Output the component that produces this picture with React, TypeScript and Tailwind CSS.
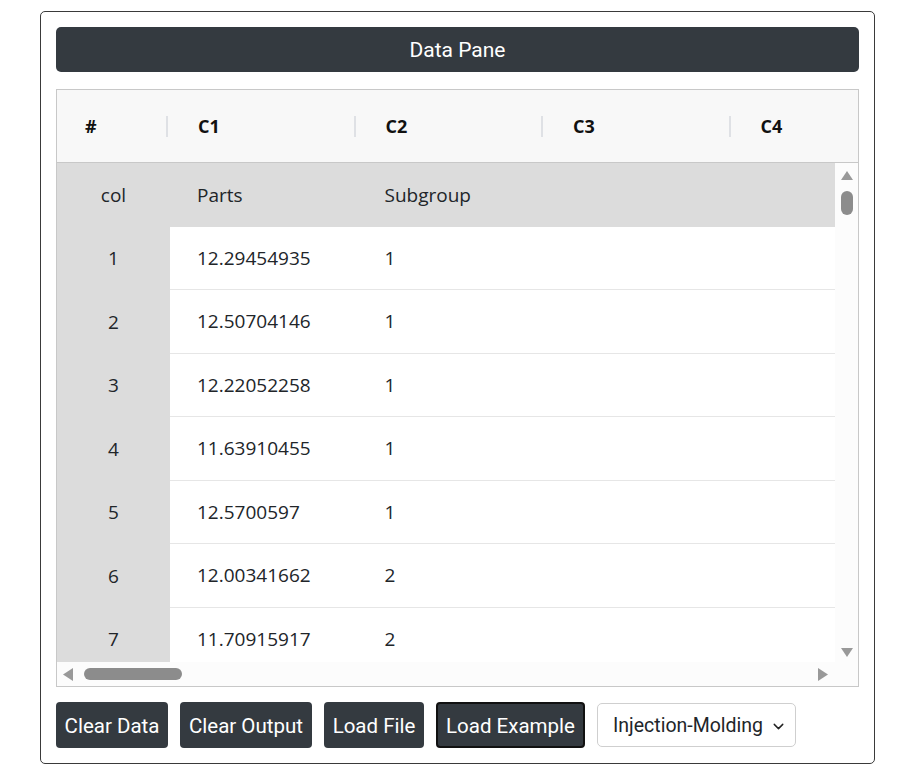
import { ChevronDown } from "lucide-react";

const rows = [
  { n: 1, parts: "12.29454935", sub: "1" },
  { n: 2, parts: "12.50704146", sub: "1" },
  { n: 3, parts: "12.22052258", sub: "1" },
  { n: 4, parts: "11.63910455", sub: "1" },
  { n: 5, parts: "12.5700597", sub: "1" },
  { n: 6, parts: "12.00341662", sub: "2" },
  { n: 7, parts: "11.70915917", sub: "2" },
];

const headers = ["C1", "C2", "C3", "C4"];

function HeaderCell({ label, first }: { label: string; first?: boolean }) {
  return (
    <div
      className={`${first ? "w-[113px]" : "w-[187.5px]"} shrink-0 h-full flex items-center justify-between pl-[28px]`}
    >
      <span className="font-bold text-[18px] text-[#111]">{label}</span>
      <span className="w-[2px] h-[21px] bg-[#dfe1e5] mr-[2px]" />
    </div>
  );
}

export default function App() {
  return (
    <div className="pt-[11px] pl-[40px] bg-white min-h-screen font-['Roboto',sans-serif]">
      <div className="w-[835px] border border-[#3a3a3a] rounded-[5px] px-[15px] pt-[15px] pb-[15px]">
        <div className="h-[45px] pt-[2px] bg-[#343a40] rounded-[5px] flex items-center justify-center text-white text-[21px]">
          Data Pane
        </div>

        <div className="mt-[17px] border border-[#c8c8c8] bg-[#fcfcfc] flex flex-col overflow-hidden font-['Open_Sans','Noto_Sans',sans-serif]">
          {/* column header */}
          <div className="h-[73px] bg-[#f8f8f8] border-b border-[#c8c8c8] flex overflow-hidden">
            <HeaderCell label="#" first />
            {headers.map((h) => (
              <HeaderCell key={h} label={h} />
            ))}
          </div>

          {/* body + vertical scrollbar */}
          <div className="h-[499px] flex">
            <div className="flex-1 overflow-hidden text-[19px] text-[#212529]">
              <div className="h-[63.5px] bg-[#dcdcdc] flex items-center">
                <div className="w-[113px] text-center">col</div>
                <div className="w-[187.5px] pl-[27px]">Parts</div>
                <div className="w-[187.5px] pl-[27px]">Subgroup</div>
              </div>
              {rows.map((r) => (
                <div key={r.n} className="h-[63.5px] flex">
                  <div className="w-[113px] shrink-0 bg-[#dcdcdc] flex items-center justify-center">
                    {r.n}
                  </div>
                  <div className="flex-1 bg-white border-b border-[#e6e6e6] flex items-center">
                    <div className="w-[187.5px] pl-[27px]">{r.parts}</div>
                    <div className="w-[187.5px] pl-[27px]">{r.sub}</div>
                  </div>
                </div>
              ))}
            </div>
            <div className="w-[23px] flex flex-col items-center pt-[8px] pb-[5px]">
              <svg width="12" height="9" viewBox="0 0 12 9">
                <path d="M6 0 L12 9 L0 9 Z" fill="#999999" />
              </svg>
              <div className="mt-[11px] w-[12px] h-[24px] rounded-full bg-[#8c8c8c]" />
              <div className="flex-1" />
              <svg width="12" height="9" viewBox="0 0 12 9">
                <path d="M0 0 L12 0 L6 9 Z" fill="#999999" />
              </svg>
            </div>
          </div>

          {/* horizontal scrollbar */}
          <div className="h-[24px] flex items-center pl-[6px] pr-[30px]">
            <svg width="10" height="13" viewBox="0 0 10 13">
              <path d="M10 0 L10 13 L0 6.5 Z" fill="#999999" />
            </svg>
            <div className="ml-[11px] w-[98px] h-[12px] rounded-full bg-[#8c8c8c]" />
            <div className="flex-1" />
            <svg width="10" height="13" viewBox="0 0 10 13">
              <path d="M0 0 L10 6.5 L0 13 Z" fill="#999999" />
            </svg>
          </div>
        </div>

        <div className="mt-[15px] flex items-center gap-[12px] text-[20.5px] text-white">
          <button className="h-[46px] w-[112px] pt-[3px] bg-[#343a40] rounded-[4px]">Clear Data</button>
          <button className="h-[46px] w-[132px] pt-[3px] bg-[#343a40] rounded-[4px]">Clear Output</button>
          <button className="h-[46px] w-[100px] pt-[3px] bg-[#343a40] rounded-[4px]">Load File</button>
          <button className="h-[46px] w-[149px] pt-[3px] bg-[#343a40] rounded-[4px] border-2 border-[#111]">
            Load Example
          </button>
          <div className="h-[44px] w-[199px] pt-[2px] border border-[#cfcfcf] rounded-[5px] bg-white text-[#212529] text-[19.5px] flex items-center pl-[15px] pr-[8px] justify-between">
            <span>Injection-Molding</span>
            <ChevronDown size={17} strokeWidth={2} className="text-[#222]" />
          </div>
        </div>
      </div>
    </div>
  );
}
